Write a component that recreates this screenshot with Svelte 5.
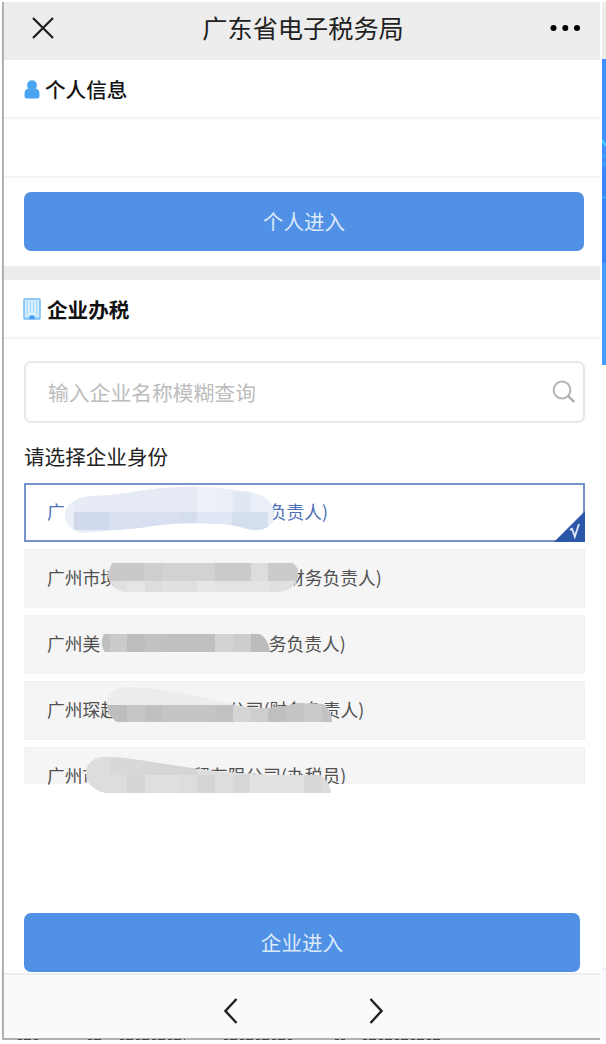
<script>
  // gap = width of the hidden part between the start and the end of a name
  const companies = [
    {
      start: '广',
      gap: 204,
      end: '负责人)',
      selected: true,
      shape: 'M65 30C65 19 76 12 92 11C120 11 145 3 180 2C215 1 232 5 245 6C262 8 274 16 274 29C274 40 266 45 257 45C245 45 240 40 220 39C190 37 160 39 140 43C120 45 102 46 82 48C72 46 65 40 65 30Z',
      base: '#eaeef7',
      blocks: [
        { x: 74, y: 8, w: 36, h: 19, fill: '#e6ebf6' },
        { x: 110, y: 0, w: 87, h: 27, fill: '#e5eaf5' },
        { x: 197, y: 0, w: 18, h: 27, fill: '#eef1f8' },
        { x: 233, y: 7, w: 18, h: 20, fill: '#e1e8f3' },
        { x: 74, y: 27, w: 35, h: 18, fill: '#d1d9ec' },
        { x: 109, y: 27, w: 71, h: 18, fill: '#d8dff0' },
        { x: 180, y: 27, w: 17, h: 18, fill: '#d4deef' },
        { x: 197, y: 27, w: 35, h: 18, fill: '#e0e6f3' },
        { x: 232, y: 27, w: 36, h: 18, fill: '#d5deed' },
      ],
    },
    {
      start: '广州市境',
      gap: 169,
      end: '财务负责人)',
      shape: 'M112 14H293L298 20V30C295 37 287 43 277 43H124C114 41 108 34 108 24Z',
      base: '#e0e0e0',
      blocks: [
        { x: 108, y: 14, w: 36, h: 18, fill: '#c9c9c9' },
        { x: 144, y: 14, w: 18, h: 18, fill: '#cecece' },
        { x: 162, y: 14, w: 53, h: 18, fill: '#d2d2d2' },
        { x: 215, y: 14, w: 36, h: 18, fill: '#cacaca' },
        { x: 251, y: 14, w: 17, h: 18, fill: '#dddddd' },
        { x: 268, y: 14, w: 30, h: 18, fill: '#cbcbcb' },
        { x: 127, y: 32, w: 18, h: 12, fill: '#e5e5e5' },
        { x: 145, y: 32, w: 17, h: 12, fill: '#dddddd' },
        { x: 197, y: 32, w: 18, h: 12, fill: '#e6e6e6' },
        { x: 215, y: 32, w: 55, h: 12, fill: '#e3e3e3' },
      ],
    },
    {
      start: '广州美',
      gap: 168.5,
      end: '务负责人)',
      shape: 'M104 19H259C265 21 269 29 270 37H105C101 32 101 25 104 19Z',
      base: '#c0c0c0',
      blocks: [
        { x: 110, y: 19, w: 17, h: 18, fill: '#cbcbcb' },
        { x: 127, y: 19, w: 18, h: 18, fill: '#bdbdbd' },
        { x: 145, y: 19, w: 17, h: 18, fill: '#c2c2c2' },
        { x: 215, y: 19, w: 18, h: 18, fill: '#d3d3d3' },
        { x: 233, y: 19, w: 18, h: 18, fill: '#cdcdcd' },
        { x: 251, y: 19, w: 19, h: 18, fill: '#bcbcbc' },
      ],
    },
    {
      start: '广州琛越',
      gap: 110,
      end: '公司(财务负责人)',
      shape: 'M107 20C108 11 117 6 130 6C160 8 195 13 231 23C257 30 281 27 298 22L323 23C329 28 332 34 332 41H117C111 37 107 31 107 20Z',
      base: '#ededed',
      blocks: [
        { x: 144, y: 0, w: 36, h: 24, fill: '#ebeced' },
        { x: 107, y: 24, w: 20, h: 18, fill: '#bdbdbd' },
        { x: 127, y: 24, w: 18, h: 18, fill: '#c6c6c6' },
        { x: 145, y: 24, w: 17, h: 18, fill: '#c0c0c0' },
        { x: 162, y: 24, w: 53, h: 18, fill: '#c5c5c5' },
        { x: 215, y: 24, w: 18, h: 18, fill: '#c1c1c1' },
        { x: 233, y: 24, w: 17, h: 18, fill: '#d5d5d5' },
        { x: 250, y: 24, w: 18, h: 18, fill: '#cecece' },
        { x: 268, y: 20, w: 18, h: 22, fill: '#bfbfbf' },
        { x: 286, y: 20, w: 18, h: 22, fill: '#c5c5c5' },
        { x: 304, y: 20, w: 18, h: 22, fill: '#cacaca' },
        { x: 322, y: 20, w: 10, h: 22, fill: '#c2c2c2' },
      ],
    },
    {
      start: '广州市',
      gap: 92,
      end: '贸有限公司(办税员)',
      shape: 'M86 26C86 17 93 10 104 10C130 10 160 17 191 21C217 25 245 26 270 28H320C327 33 331 39 331 46H105C93 43 86 36 86 26Z',
      base: '#dddddd',
      blocks: [
        { x: 109, y: 0, w: 36, h: 28, fill: '#d8d8d8' },
        { x: 145, y: 0, w: 52, h: 28, fill: '#d5d5d5' },
        { x: 127, y: 28, w: 18, h: 18, fill: '#d5d5d5' },
        { x: 145, y: 28, w: 35, h: 18, fill: '#dfdfdf' },
        { x: 197, y: 28, w: 18, h: 18, fill: '#d5d5d5' },
        { x: 233, y: 28, w: 17, h: 18, fill: '#d7d7d7' },
        { x: 250, y: 28, w: 54, h: 18, fill: '#e2e2e2' },
        { x: 304, y: 28, w: 17, h: 18, fill: '#d7d7d7' },
      ],
    },
  ]
</script>

<div class="screen">
  <div class="phone">
    <header class="navbar">
      <svg width="22" height="22" viewBox="0 0 22 22">
        <path d="M1 1L21 21M21 1L1 21" fill="none" stroke="#1c1c1c" stroke-width="2.2" />
      </svg>
      <h1>广东省电子税务局</h1>
      <svg width="32" height="8" viewBox="0 0 32 8">
        <circle cx="4.5" cy="4" r="3" />
        <circle cx="16.3" cy="4" r="3" />
        <circle cx="28" cy="4" r="3" />
      </svg>
    </header>

    <section>
      <h2>
        <svg width="16" height="19" viewBox="0 0 16 19">
          <path d="M0.5 14Q0.5 8.5 5 8.5H11Q15.5 8.5 15.5 14V16Q15.5 18.5 13 18.5H3Q0.5 18.5 0.5 16Z" fill="#48a4f2" />
          <circle cx="8" cy="5.2" r="4.8" fill="#48a4f2" stroke="#6ab5f5" stroke-width="0.5" />
        </svg>
        个人信息
      </h2>
      <div class="person"></div>
      <button class="personal">个人进入</button>
    </section>

    <section class="company">
      <h2>
        <svg class="building-icon" width="18" height="22" viewBox="0 0 18 22">
          <rect x="1" y="1" width="16" height="20" rx="1" fill="#d9eefe" stroke="#70bbf8" stroke-width="1.5" />
          <path d="M4.2 3V17M7.4 3V15M10.6 3V15M13.8 3V17" stroke="#97cffa" stroke-width="0.9" />
          <path d="M2 19.5H16" stroke="#a6d6fb" stroke-width="1.2" />
          <path d="M6.3 21V18.6L7.3 17.4H10.7L11.7 18.6V21Z" fill="#3d9cf2" />
        </svg>
        企业办税
      </h2>

      <div class="search">
        <span>输入企业名称模糊查询</span>
        <svg width="24" height="24" viewBox="0 0 24 24">
          <circle cx="10" cy="10" r="8.4" fill="none" stroke="#b5b5b5" stroke-width="2" />
          <path d="M16 16L22.3 22" stroke="#a8a8a8" stroke-width="2.4" />
        </svg>
      </div>

      <p class="label">请选择企业身份</p>

      <div class="list">
        {#each companies as company, i}
          <div class="option" class:selected={company.selected}>
            <span>{company.start}</span>
            <span style="margin-left: {company.gap}px">{company.end}</span>
            <svg class="mask" width="340" height="50" viewBox="0 0 340 50">
              <clipPath id="mask-{i}"><path d={company.shape} /></clipPath>
              <g clip-path="url(#mask-{i})">
                <rect width="340" height="50" fill={company.base} />
                {#each company.blocks as block}
                  <rect x={block.x} y={block.y} width={block.w} height={block.h} fill={block.fill} />
                {/each}
              </g>
            </svg>
            {#if company.selected}
              <svg class="check" width="31" height="31" viewBox="0 0 31 31">
                <path d="M31 0V31H0Z" fill="#2b57a8" />
                <path d="M16 18.8L18 17.8L20.8 25.5L25 13" fill="none" stroke="#dce5f4" stroke-width="1.9" />
              </svg>
            {/if}
          </div>
        {/each}
      </div>

      <button class="enter">企业进入</button>
    </section>

    <footer>
      <svg width="14" height="26" viewBox="0 0 14 26">
        <path d="M12.5 1L1.5 13L12.5 25" fill="none" stroke="#222" stroke-width="2.4" />
      </svg>
      <svg width="14" height="26" viewBox="0 0 14 26">
        <path d="M1.5 1L12.5 13L1.5 25" fill="none" stroke="#222" stroke-width="2.4" />
      </svg>
    </footer>

    <svg class="edge" width="598" height="2" viewBox="0 0 598 2">
      <rect width="598" height="2" fill="#b0b0b0" />
      <path
        d="M16 1.5H36M86 1.5H101M118 1.5H183M222 1.5H290M333 1.5H343M361 1.5H438"
        stroke="#4c4542"
        stroke-width="1"
        stroke-dasharray="4 2 7 3"
      />
    </svg>
  </div>

  <!-- the neighbouring screen, cut off at the right -->
  <aside>
    <div class="next-bar"></div>
    <svg width="4" height="306" viewBox="0 0 4 306">
      <rect width="4" height="204" fill="#3f8ffb" />
      <rect y="110" width="4" height="94" fill="#3c85f6" />
      <rect y="204" width="4" height="102" fill="#459bfb" />
      <path d="M0 81L4 87" stroke="#43d0fb" stroke-width="2.5" />
      <path d="M0 97H4M0 105H4" stroke="#3aa0fb" stroke-width="3" />
      <path d="M0 138.5H4" stroke="#3cabfb" stroke-width="2" />
    </svg>
    <div class="next-body"></div>
    <div class="next-footer"></div>
  </aside>
</div>

<style>
  :global(body) {
    background: #fff;
  }

  .screen {
    box-sizing: border-box;
    display: flex;
    gap: 2px;
    width: 606px;
    height: 1044px;
    padding: 2px 0 4px 2px;
    overflow: hidden;
    font-family: 'Noto Sans CJK SC', sans-serif;
    color: #111;
  }

  .phone {
    display: flex;
    flex-direction: column;
    box-sizing: border-box;
    width: 598px;
    background: #fff;
    box-shadow: inset 1px 0 #aaa, inset 2px 0 #b8b8b8;
  }

  .navbar {
    display: flex;
    flex: none;
    align-items: center;
    justify-content: space-between;
    box-sizing: border-box;
    height: 58px;
    margin-left: 2px;
    padding: 0 19px 6px 28px;
    background: #ededed;
  }

  h1 {
    margin: 0 0 2px 3px;
    font-size: 25.2px;
    font-weight: 400;
    line-height: 50px;
    color: #222;
  }

  h2 {
    display: flex;
    align-items: center;
    gap: 5px;
    box-sizing: border-box;
    height: 59px;
    margin: 0 0 0 2px;
    padding: 1px 0 0 20px;
    border-bottom: 2px solid #f4f4f4;
    font-size: 20.6px;
    font-weight: 500;
  }

  .company h2 {
    gap: 6px;
    margin-left: 0;
    padding-top: 0;
    font-weight: 700;
  }

  .building-icon {
    margin-left: -1px;
  }

  .person {
    box-sizing: border-box;
    height: 59px;
    margin-left: 2px;
    border-bottom: 2px solid #f4f4f4;
  }

  button {
    display: block;
    height: 59px;
    margin: 14px 0 15px 22px;
    padding: 0 0 2px;
    border: 0;
    border-radius: 7px;
    background: #5091e6;
    color: #dce9fb;
    font: 400 20.6px 'Noto Sans CJK SC', sans-serif;
  }

  .personal {
    width: 560px;
  }

  .company {
    margin-left: 2px;
    border-top: 14px solid #ededed;
  }

  .search {
    display: flex;
    align-items: center;
    justify-content: space-between;
    box-sizing: border-box;
    width: 561px;
    height: 62px;
    margin: 22px 0 0 20px;
    padding: 0 7px 1px 22px;
    border: 2px solid #e8e8e8;
    border-radius: 7px;
    color: #bcbcbc;
    font-size: 20.8px;
  }

  .label {
    margin: 18px 0 11px 20px;
    font-size: 20.6px;
    line-height: 31px;
    color: #222;
  }

  .list {
    display: flex;
    flex-direction: column;
    gap: 7px;
    width: 561px;
    height: 301px;
    margin-left: 20px;
    overflow: hidden;
    padding-bottom: 10px;
    clip-path: polygon(0 0, 100% 0, 100% 301px, 55% 301px, 55% 100%, 0 100%, 0 0);
  }

  .option {
    position: relative;
    display: flex;
    flex: none;
    align-items: center;
    box-sizing: border-box;
    height: 59px;
    padding: 0 0 3px 22px;
    border: 1px solid #f1f1f1;
    background: #f5f5f5;
    color: #505050;
    font-size: 17.75px;
    white-space: nowrap;
  }

  .option:last-child {
    height: 37px;
    align-items: flex-start;
    border-bottom: 0;
    line-height: 55px;
  }

  .option.selected {
    padding-left: 21px;
    border: 2px solid #7793cc;
    background: #fff;
    color: #4b6fb8;
  }

  .mask {
    position: absolute;
    left: -25px;
    top: -1px;
  }

  .selected .mask {
    left: -26px;
    top: 0;
  }

  .check {
    position: absolute;
    right: -2px;
    bottom: -2px;
  }

  .enter {
    width: 556px;
    margin: 119px 0 0 20px;
  }

  footer {
    display: flex;
    flex: none;
    align-items: center;
    justify-content: center;
    gap: 131px;
    box-sizing: border-box;
    height: 65px;
    margin: auto 0 0 2px;
    padding: 8px 0 0 3px;
    border-top: 2px solid #eee;
    background: #fafafc;
  }

  .edge {
    display: block;
    flex: none;
  }

  aside {
    display: flex;
    flex: none;
    flex-direction: column;
    width: 4px;
  }

  aside svg {
    flex: none;
  }

  .next-bar {
    flex: none;
    height: 57px;
    background: #ededed;
  }

  .next-body {
    flex: 1;
  }

  .next-footer {
    flex: none;
    height: 71px;
    border-top: 1px solid #eee;
    background: #fafafc;
  }
</style>
